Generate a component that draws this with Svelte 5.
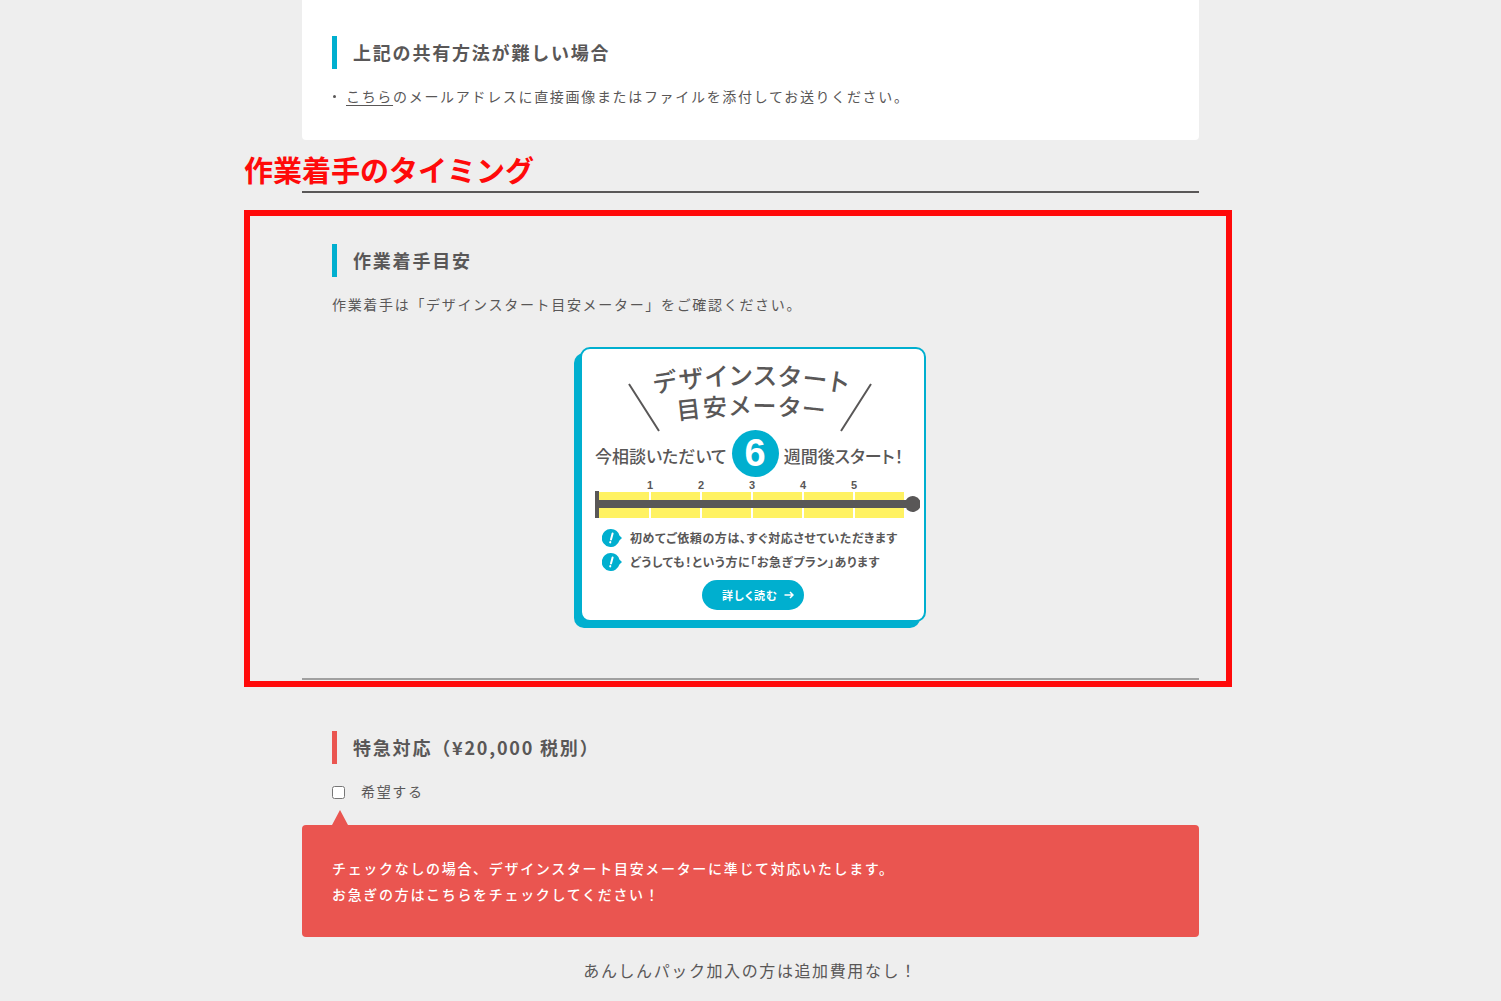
<script>
  let rush = $state(false);

  const segments = [0, 1, 2, 3, 4, 5];
  const notes = [
    '初めてご依頼の方は、すぐ対応させていただきます',
    'どうしても！という方に「お急ぎプラン」あります'
  ];
</script>

<main class="page">
  <section class="panel">
    <h3 class="label">上記の共有方法が難しい場合</h3>
    <ul class="bullets">
      <li><a href="#mail">こちら</a>のメールアドレスに直接画像またはファイルを添付してお送りください。</li>
    </ul>
  </section>

  <h2 class="section-title">作業着手のタイミング</h2>

  <section class="timing">
    <div class="frame" aria-hidden="true"></div>
    <h3 class="label">作業着手目安</h3>
    <p class="text">作業着手は「デザインスタート目安メーター」をご確認ください。</p>

    <div class="card-wrap">
      <article class="card">
        <svg class="card-title" viewBox="0 0 342 84" role="img" aria-label="デザインスタート目安メーター">
          <defs>
            <path id="arc-top" d="M50 49A550 550 0 0 1 290 49" />
            <path id="arc-bottom" d="M50 79A550 550 0 0 1 290 79" />
          </defs>
          <text class="line-top"><textPath href="#arc-top" startOffset="50%">デザインスタート</textPath></text>
          <text class="line-bottom"><textPath href="#arc-bottom" startOffset="50%">目安メーター</textPath></text>
          <path class="slash" d="M47 35L77 82M289 35L259 82" />
        </svg>

        <p class="lead">
          <span>今相談いただいて</span>
          <strong>6</strong>
          <span>週間後スタート！</span>
        </p>

        <svg class="meter" viewBox="0 0 326 38" role="img" aria-label="6週間">
          {#each segments as n}
            <rect class="week" x={n * 51 + (n ? 5 : 4)} y="12" width={n ? 49 : 50} height="26" />
            {#if n > 0}
              <text x={n * 51 + 4} y="9">{n}</text>
            {/if}
          {/each}
          <rect class="ink" x="0" y="11" width="4" height="27" />
          <rect class="ink" x="4" y="20" width="312" height="8" />
          <path class="ink" d="M325 20.5V27.5A8 8 0 1 1 325 20.5Z" />
        </svg>

        <ul class="notes">
          {#each notes as note}
            <li>
              <svg viewBox="0 0 20 18" aria-hidden="true">
                <path class="bubble" d="M9 0A9 9 0 0 1 17.4 6.5L20 9L17.4 11.5A9 9 0 1 1 9 0Z" />
                <path class="mark" d="M10.6 4.5L9 10.5M8.3 13L8.2 13.4" />
              </svg>
              <span>{note}</span>
            </li>
          {/each}
        </ul>

        <a class="more" href="#meter">
          詳しく読む
          <svg viewBox="0 0 10 8" aria-hidden="true"><path d="M0.5 4H9M6 1L9 4L6 7" /></svg>
        </a>
      </article>
    </div>
  </section>

  <section class="rush">
    <h3 class="label red">特急対応（¥20,000 税別）</h3>
    <label class="check">
      <input type="checkbox" bind:checked={rush} />
      希望する
    </label>
    <div class="notice">
      <p>チェックなしの場合、デザインスタート目安メーターに準じて対応いたします。</p>
      <p>お急ぎの方はこちらをチェックしてください！</p>
    </div>
  </section>

  <p class="foot">あんしんパック加入の方は追加費用なし！</p>
</main>

<style>
  :global(body) {
    background: #eee;
    color: #595757;
    font-family: 'Noto Sans CJK JP', 'Noto Sans', sans-serif;
    font-size: 14px;
    line-height: 26px;
    letter-spacing: 0.12em;
  }

  h2, h3, p, ul {
    margin: 0;
    padding: 0;
  }

  ul {
    list-style: none;
  }

  .page {
    box-sizing: border-box;
    width: 100%;
    max-width: 897px;
    margin: 0 auto;
  }

  .panel {
    padding: 36px 30px 31px;
    background: #fff;
    border-radius: 0 0 4px 4px;
  }

  .label {
    margin-bottom: 14px;
    padding-left: 16px;
    border-left: 5px solid #00afcf;
    font-size: 18px;
    line-height: 33px;
    letter-spacing: 0.1em;
  }

  .label.red {
    border-color: #ea5550;
  }

  .bullets li {
    display: flex;
    align-items: center;
  }

  .bullets li::before {
    content: '';
    width: 3px;
    height: 3px;
    margin: 0 10px 0 1px;
    border-radius: 50%;
    background: #595757;
  }

  .bullets a {
    color: inherit;
    text-underline-offset: 3px;
  }

  .section-title {
    margin-left: -58px;
    padding-top: 7px;
    color: #ff0a0a;
    font-size: 29px;
    line-height: 44px;
    letter-spacing: 0;
  }

  .timing {
    position: relative;
    padding: 51px 30px 56px;
    border-top: 2px solid #595757;
    border-bottom: 2px solid #a0a0a0;
  }

  .frame {
    position: absolute;
    inset: 17px -33px -9px -58px;
    border: 6px solid #ff0a0a;
    pointer-events: none;
  }

  .card-wrap {
    display: flex;
    justify-content: center;
    margin-top: 30px;
    padding-left: 5px;
  }

  .card {
    box-sizing: border-box;
    width: 346px;
    display: flex;
    flex-direction: column;
    padding-bottom: 10px;
    border: 2px solid #00afcf;
    border-radius: 10px;
    background: #fff;
    box-shadow: -6px 6px 0 #00afcf;
    font-feature-settings: 'palt';
    letter-spacing: 0;
  }

  .card-title {
    display: block;
    width: 342px;
    height: 84px;
  }

  .card-title text {
    fill: #595757;
    font-weight: 500;
    letter-spacing: 2px;
    text-anchor: middle;
  }

  .line-top {
    font-size: 25px;
  }

  .line-bottom {
    font-size: 24px;
  }

  .slash {
    fill: none;
    stroke: #595757;
    stroke-width: 2;
  }

  .lead {
    display: flex;
    align-items: center;
    gap: 5px;
    height: 40px;
    padding-left: 13px;
    font-size: 17px;
    font-weight: 500;
    white-space: nowrap;
  }

  .lead span {
    padding-top: 6px;
  }

  .lead strong {
    width: 47px;
    height: 47px;
    border-radius: 50%;
    background: #00afcf;
    color: #fff;
    font: bold 38px/47px 'Liberation Sans', sans-serif;
    text-align: center;
  }

  .meter {
    display: block;
    width: 326px;
    height: 38px;
    margin: 7px 0 0 13px;
  }

  .meter text {
    fill: #595757;
    font-family: 'Liberation Sans', sans-serif;
    font-size: 11px;
    font-weight: 700;
    text-anchor: middle;
  }

  .week {
    fill: #fff262;
  }

  .ink {
    fill: #595757;
  }

  .notes {
    padding: 8px 0 0 20px;
    font-size: 12px;
    font-weight: 700;
    line-height: 24px;
    letter-spacing: 0.05em;
    white-space: nowrap;
  }

  .notes li {
    display: flex;
    align-items: center;
    gap: 8px;
  }

  .notes svg {
    width: 20px;
    height: 18px;
  }

  .bubble {
    fill: #00afcf;
  }

  .mark {
    fill: none;
    stroke: #fff;
    stroke-width: 2;
    stroke-linecap: round;
  }

  .more {
    box-sizing: border-box;
    align-self: center;
    display: flex;
    align-items: center;
    justify-content: center;
    gap: 6px;
    width: 102px;
    height: 30px;
    margin-top: 6px;
    padding-left: 10px;
    border-radius: 15px;
    background: #00afcf;
    color: #fff;
    font-size: 11px;
    font-weight: 700;
    letter-spacing: 1px;
    text-decoration: none;
  }

  .more svg {
    width: 10px;
    height: 8px;
    fill: none;
    stroke: #fff;
    stroke-width: 1.5;
  }

  .rush {
    padding-top: 51px;
  }

  .rush .label,
  .check {
    margin-left: 30px;
  }

  .check {
    display: flex;
    align-items: center;
    width: fit-content;
  }

  .check input {
    width: 13px;
    height: 13px;
    margin: 3px 16px 0 0;
  }

  .notice {
    position: relative;
    margin-top: 21px;
    padding: 30px;
    border-radius: 4px;
    background: #ea5550;
    color: #fff;
    font-weight: 500;
  }

  .notice::before {
    content: '';
    position: absolute;
    bottom: 100%;
    left: 30px;
    border: solid transparent;
    border-width: 0 8px 15px;
    border-bottom-color: #ea5550;
  }

  .foot {
    padding: 20px 0 17px;
    font-size: 16px;
    letter-spacing: 0.1em;
    text-align: center;
  }
</style>
